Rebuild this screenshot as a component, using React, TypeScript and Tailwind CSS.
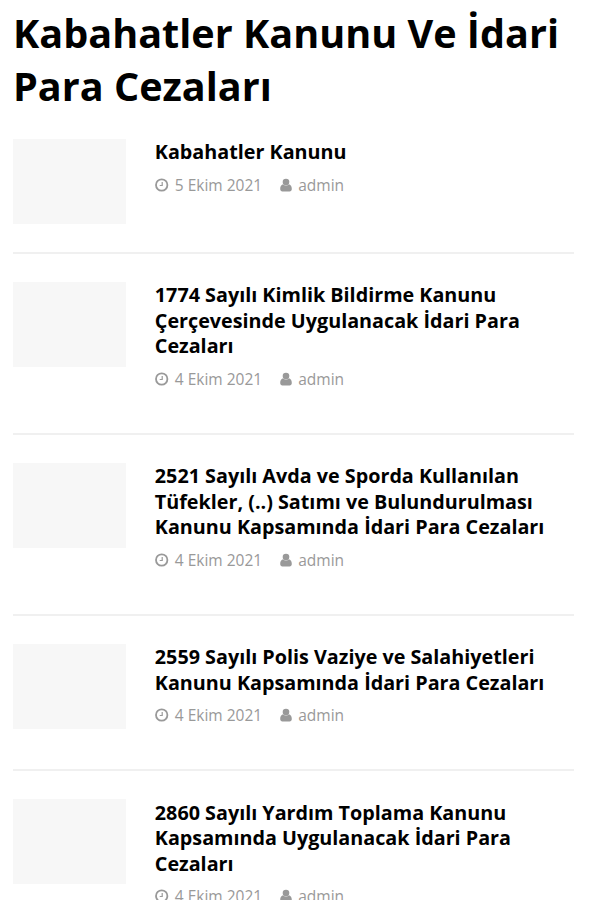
interface Post {
  title: string[]; date: string; author: string
}
const POSTS: Post[] = [
  { title: ['Kabahatler Kanunu'], date: '5 Ekim 2021', author: 'admin' },
  { title: ['1774 Sayılı Kimlik Bildirme Kanunu', 'Çerçevesinde Uygulanacak İdari Para', 'Cezaları'], date: '4 Ekim 2021', author: 'admin' },
  { title: ['2521 Sayılı Avda ve Sporda Kullanılan', 'Tüfekler, (..) Satımı ve Bulundurulması', 'Kanunu Kapsamında İdari Para Cezaları'], date: '4 Ekim 2021', author: 'admin' },
  { title: ['2559 Sayılı Polis Vaziye ve Salahiyetleri', 'Kanunu Kapsamında İdari Para Cezaları'], date: '4 Ekim 2021', author: 'admin' },
  { title: ['2860 Sayılı Yardım Toplama Kanunu', 'Kapsamında Uygulanacak İdari Para', 'Cezaları'], date: '4 Ekim 2021', author: 'admin' },
]

export default function App() {
  return (
    <div className="h-[900px] overflow-hidden bg-white pl-[13px] pr-[22px] pt-[7px] font-['Open_Sans',sans-serif]">
      <h1 className="text-[39.6px] leading-[52.5px] font-bold text-black">
        <span className="block whitespace-nowrap">Kabahatler Kanunu Ve İdari</span>
        <span className="block whitespace-nowrap">Para Cezaları</span>
      </h1>
      <main className="mt-[27px]">
        {POSTS.map((p) => <PostRow key={p.title[0]} post={p} />)}
      </main>
    </div>
  )
}

function PostRow({ post }: { post: Post }) {
  return (
    <article className="mb-7 flex items-start gap-[28.8px] border-b-2 border-[#f0f0f0] pb-7">
      <div className="h-[85px] w-[113px] shrink-0 bg-[#f7f7f7]" />
      <div className="pt-[0.4px] pb-[13px]">
        <h2 className="text-[19.75px] leading-[25.5px] font-bold text-black">
          {post.title.map((line) => <span key={line} className="block whitespace-nowrap">{line}</span>)}
        </h2>
        <Meta date={post.date} author={post.author} />
      </div>
    </article>
  )
}

function Meta({ date, author }: { date: string; author: string }) {
  return (
    <div className="mt-[8px] flex items-center pb-px text-[15.5px] leading-[24px] text-[#999]">
      <ClockIcon />
      <span className="ml-1.5">{date}</span>
      <UserIcon />
      <span className="ml-1.5">{author}</span>
    </div>
  )
}

function ClockIcon() {
  return (
    <svg width="14" height="14" viewBox="0 0 14 14" fill="none" stroke="currentColor">
      <circle cx="6.7" cy="7" r="5.7" strokeWidth="1.8" />
      <path d="M7.2 4v3.5H4.7" strokeWidth="1.2" />
    </svg>
  )
}

function UserIcon() {
  return (
    <svg width="12" height="14" viewBox="0 0 12 14" fill="currentColor" className="ml-[18px]">
      <circle cx="6" cy="4" r="3.3" />
      <path d="M3 6.3C1 6.8.2 8.8.2 11c0 1.5.9 2.5 2.2 2.5h7.2c1.3 0 2.2-1 2.2-2.5 0-2.2-.8-4.2-2.8-4.7-1.6 1.6-4.4 1.6-6 0z" />
    </svg>
  )
}
